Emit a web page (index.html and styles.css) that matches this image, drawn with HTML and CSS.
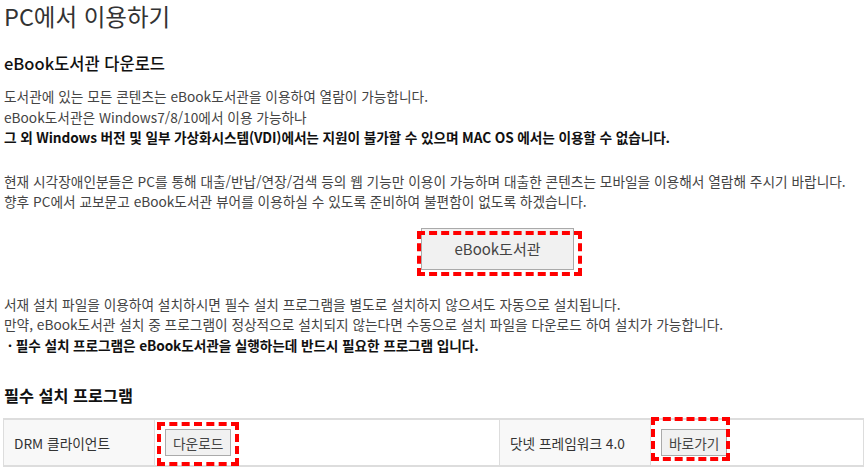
FILE: index.html
```html
<!DOCTYPE html>
<html lang="ko">
<head>
    <meta charset="UTF-8">
    <title>PC에서 이용하기</title>
    <link rel="stylesheet" href="styles.css">
</head>
<body>
    <div class="page">
        <h1>PC에서 이용하기</h1>

        <h2>eBook도서관 다운로드</h2>
        <p class="info">
            도서관에 있는 모든 콘텐츠는 eBook도서관을 이용하여 열람이 가능합니다.<br>
            eBook도서관은 Windows7/8/10에서 이용 가능하나<br>
            <strong>그 외 Windows 버전 및 일부 가상화시스템(VDI)에서는 지원이 불가할 수 있으며 MAC OS 에서는 이용할 수 없습니다.</strong>
        </p>
        <p class="info">
            현재 시각장애인분들은 PC를 통해 대출/반납/연장/검색 등의 웹 기능만 이용이 가능하며 대출한 콘텐츠는 모바일을 이용해서 열람해 주시기 바랍니다.<br>
            향후 PC에서 교보문고 eBook도서관 뷰어를 이용하실 수 있도록 준비하여 불편함이 없도록 하겠습니다.
        </p>

        <div class="main-btn-wrap">
            <span class="mark mark-main">
                <button type="button" class="btn-main">eBook도서관</button>
            </span>
        </div>

        <p class="info">
            서재 설치 파일을 이용하여 설치하시면 필수 설치 프로그램을 별도로 설치하지 않으셔도 자동으로 설치됩니다.<br>
            만약, eBook도서관 설치 중 프로그램이 정상적으로 설치되지 않는다면 수동으로 설치 파일을 다운로드 하여 설치가 가능합니다.<br>
            <strong>&nbsp;· 필수 설치 프로그램은 eBook도서관을 실행하는데 반드시 필요한 프로그램 입니다.</strong>
        </p>

        <h2 class="sub">필수 설치 프로그램</h2>
        <table class="prog-table">
            <tr>
                <th>DRM 클라이언트</th>
                <td class="col-btn">
                    <span class="mark mark-down">
                        <button type="button" class="btn-small">다운로드</button>
                    </span>
                </td>
                <th>닷넷 프레임워크 4.0</th>
                <td>
                    <span class="mark mark-go">
                        <button type="button" class="btn-small">바로가기</button>
                    </span>
                </td>
            </tr>
        </table>
    </div>
</body>
</html>
```

FILE: styles.css
```css
body {
    margin: 0;
    font-family: "Noto Sans CJK KR", "Noto Sans", sans-serif;
    font-size: 13.7px;
    color: #444;
    background: #fff;
}
.page {
    padding: 2px 0 0 4px;
}
h1 {
    margin: 0;
    font-size: 23.5px;
    font-weight: 400;
    line-height: 28px;
    color: #333;
}
h2 {
    margin: 21px 0 11px;
    font-size: 16.5px;
    font-weight: 500;
    line-height: 24px;
    color: #111;
}
h2.sub {
    margin: 28px 0 11px;
    font-size: 16.3px;
    font-weight: 700;
}
.info {
    margin: 0 0 23px;
    line-height: 20.5px;
}
.info strong {
    color: #111;
    font-weight: 700;
    letter-spacing: -0.12px;
}
.main-btn-wrap {
    display: flex;
    margin: -7px 0 24px;
    padding-left: 417px;
}
button {
    font-family: inherit;
    color: #444;
    background: #f1f1f1;
    border: 1px solid #aaa;
    cursor: pointer;
}
.btn-main {
    width: 153px;
    height: 42px;
    font-size: 15px;
}
.btn-small {
    height: 27px;
    padding: 0 7px;
    font-size: 13.7px;
}
.mark {
    position: relative;
    display: inline-block;
    vertical-align: middle;
}
.mark::after {
    content: "";
    position: absolute;
    border: 4px dashed #f00;
    pointer-events: none;
}
.mark-main::after {
    left: -4px;
    top: 3px;
    right: -8px;
    bottom: -6px;
}
.mark-down::after {
    left: -8px;
    top: -7px;
    right: -8px;
    bottom: -10px;
}
.mark-go::after {
    left: -10px;
    top: -12px;
    right: -3px;
    bottom: -5px;
}
.prog-table {
    width: calc(100% + 1px);
    margin-left: -1px;
    table-layout: fixed;
    border-collapse: collapse;
    border-top: 2px solid #ddd;
    border-bottom: 2px solid #ddd;
}
.prog-table th,
.prog-table td {
    height: 45px;
    padding: 0 10px;
    border: 1px solid #ddd;
    text-align: left;
    font-size: 13.7px;
}
.prog-table th {
    width: 130px;
    font-weight: 400;
    color: #333;
    background: #f8f8f8;
}
.prog-table td.col-btn {
    width: 324px;
}
```
